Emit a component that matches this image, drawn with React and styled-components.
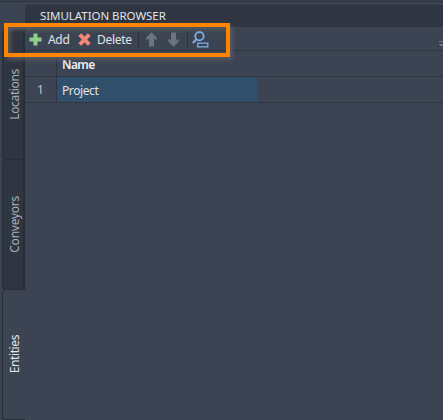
import React from 'react';
import styled, { createGlobalStyle } from 'styled-components';

const GlobalStyle = createGlobalStyle`
  * { box-sizing: border-box; }
  body {
    margin: 0;
    overflow: hidden;
    background: #3c4453;
    color: #e0e3e7;
    font-family: "Noto Sans", sans-serif;
    font-size: 12px;
  }
`;

const Window = styled.div`
  position: relative;
  width: 443px;
  height: 420px;
  display: flex;
  flex-direction: column;
  background: #3c4453;
`;

const TopEdge = styled.div`
  height: 5px;
  flex: none;
  border-top: 1px solid #36404e;
  box-shadow: inset 0 1px 0 #2d3542;
`;

const Body = styled.div`
  flex: 1;
  display: flex;
  min-height: 0;
`;

const TabStrip = styled.nav`
  width: 25px;
  flex: none;
  padding: 25px 0 0 2px;
  display: flex;
  flex-direction: column;
`;

const Tab = styled.div`
  flex: none;
  height: 130px;
  display: flex;
  align-items: center;
  justify-content: center;
  padding: 0 ${(p) => (p.$active ? 2 : 0)}px 0 3px;
  border: 1px solid #262e3a;
  border-right: ${(p) => (p.$active ? '0' : '2px solid #262e3a')};
  border-top-width: 0;
  border-radius: 3px 0 0 3px;
  background: ${(p) => (p.$active ? '#3c4453' : '#2f3541')};
  color: ${(p) => (p.$active ? '#e2e5ea' : '#a8aeb8')};
`;

const TabLabel = styled.span`
  writing-mode: vertical-rl;
  transform: rotate(180deg);
  line-height: 16px;
  white-space: nowrap;
  font-size: 12px;
  letter-spacing: ${(p) => p.$spacing || 0}px;
`;

const Panel = styled.main`
  flex: 1;
  min-width: 0;
  display: flex;
  flex-direction: column;
`;

const Title = styled.header`
  height: 22px;
  padding-left: 15px;
  background: #2f3541;
  line-height: 22px;
  font-size: 11.5px;
  letter-spacing: -0.05px;
  white-space: nowrap;
`;

const Toolbar = styled.div`
  height: 24px;
  display: flex;
  align-items: center;
  border-bottom: 1px solid #2e3643;
  padding: 2px 0 0 4px;
`;

const ToolLabel = styled.span`
  width: ${(p) => p.$width}px;
  margin-left: 6px;
  padding-top: 1px;
  line-height: 20px;
  font-size: 12px;
  letter-spacing: -0.3px;
  white-space: nowrap;
`;

const Divider = styled.i`
  width: 1px;
  height: 18px;
  margin-right: ${(p) => p.$gap}px;
  background: #2b323e;
`;

const Icon = styled.svg`
  flex: none;
  display: block;
  margin-right: ${(p) => p.$gap || 0}px;
`;

const Overflow = styled(Icon)`
  margin: 7px 0 0 auto;
`;

const Row = styled.div`
  height: 26px;
  display: grid;
  grid-template-columns: 32px 200px 1fr;
  border-bottom: 1px solid #2e3643;
`;

const IndexCell = styled.div`
  border-right: 1px solid #2e3643;
  color: #c0c5cd;
  text-align: center;
  line-height: 26px;
`;

const HeadCell = styled.div`
  padding-left: 5px;
  font-weight: 600;
  letter-spacing: -0.6px;
  line-height: 27px;
  color: #f0f2f4;
`;

const NameCell = styled.div`
  height: 25px;
  padding-left: 5px;
  letter-spacing: -0.4px;
  line-height: 28px;
  background: #2f4f6b;
`;

const Callout = styled.div`
  position: absolute;
  left: 4px;
  top: 23px;
  width: 226px;
  height: 34px;
  border: 4px solid #ff8400;
  box-shadow: 3px 3px 4px rgba(95, 96, 99, 0.75), inset 3px 3px 4px rgba(95, 96, 99, 0.75);
  pointer-events: none;
`;

export default function App() {
  return (
    <>
      <GlobalStyle />
      <Window>
        <TopEdge />
        <Body>
          <TabStrip>
            <Tab><TabLabel $spacing={-0.35}>Locations</TabLabel></Tab>
            <Tab><TabLabel $spacing={-0.25}>Conveyors</TabLabel></Tab>
            <Tab $active><TabLabel $spacing={-0.4}>Entities</TabLabel></Tab>
          </TabStrip>
          <Panel>
            <Title>SIMULATION BROWSER</Title>
            <Toolbar>
              <Icon width="13" height="13" viewBox="0 0 13 13">
                <path d="M4.5 .5h4v4h4v4h-4v4h-4v-4h-4v-4h4z" fill="#8bd18b" />
              </Icon>
              <ToolLabel $width={30}>Add</ToolLabel>
              <Icon width="13" height="13" viewBox="0 0 13 13">
                <path d="M3.2 .2 6.5 3.6 9.8 .2 12.7 2.8 9.2 6.5 12.7 10.2 9.8 12.8 6.5 9.4 3.2 12.8 .3 10.2 3.8 6.5 .3 2.8z" fill="#f48773" />
              </Icon>
              <ToolLabel $width={41}>Delete</ToolLabel>
              <Divider $gap={7} />
              <Icon width="12" height="15" viewBox="0 0 12 15" $gap={10}>
                <path d="M5.5 .3 10.7 5.6v2.6L8 6.5v8H3v-8L.3 8.2V5.6z" fill="#6c747f" />
              </Icon>
              <Icon width="12" height="15" viewBox="0 0 12 15" $gap={7}>
                <path d="M5.5 14.7.3 9.4V6.8L3 8.5v-8h5v8l2.7-1.7v2.6z" fill="#6c747f" />
              </Icon>
              <Divider $gap={4} />
              <Icon width="17" height="17" viewBox="0 0 17 17" fill="none" stroke="#7caee8">
                <circle cx="7.5" cy="5.2" r="4.2" strokeWidth="1.8" />
                <path d="M4.5 8.2 .8 12" strokeWidth="2" />
                <path d="M5.8 12.2h10v3.6h-10z" strokeWidth="1.3" />
              </Icon>
              <Overflow width="4" height="7" viewBox="0 0 4 7">
                <path d="M0 1.5h4M0 4.5h4M1 5.5h3" stroke="#69727e" />
              </Overflow>
            </Toolbar>
            <Row>
              <IndexCell />
              <HeadCell>Name</HeadCell>
            </Row>
            <Row>
              <IndexCell>1</IndexCell>
              <NameCell>Project</NameCell>
            </Row>
          </Panel>
        </Body>
        <Callout />
      </Window>
    </>
  );
}
